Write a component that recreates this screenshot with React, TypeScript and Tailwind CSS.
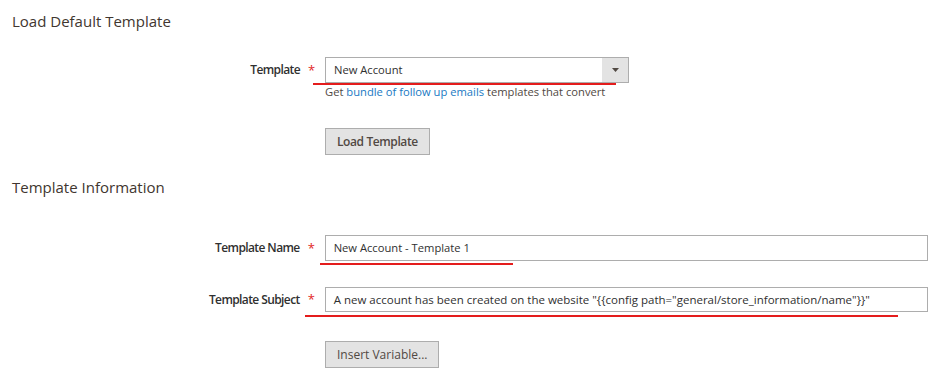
const fieldLabel = 'w-[288px] text-right text-[12px] font-semibold tracking-[-0.6px] text-[#303030]'

function Required() {
  return <span className="ml-[8px] w-[17px] text-[13px] leading-none text-[#e22626]">*</span>
}

function Underline({ left, width, top }: { left: number; width: number; top: number }) {
  return (
    <span
      className="pointer-events-none absolute h-[2px] bg-[#e41c1c]"
      style={{ left, width, top }}
    />
  )
}

export default function App() {
  return (
    <div className="relative min-h-[379px] w-[940px] bg-white px-[12px] font-['Open_Sans',sans-serif] text-[#303030]">
      <h2 className="pt-[11px] text-[15px] leading-[20px] text-[#41362f]">Load Default Template</h2>

      <div className="relative mt-[26px] flex items-center">
        <label className={fieldLabel}>Template</label>
        <Required />
        <div className="flex h-[26px] w-[304px] items-stretch border border-[#adadad] bg-white">
          <span className="flex flex-1 items-center pl-[8px] text-[11.2px] text-[#303030]">New Account</span>
          <span className="flex w-[26px] items-center justify-center bg-[#e3e3e3]">
            <svg width="7" height="4" viewBox="0 0 7 4">
              <path d="M0 0h7L3.5 4z" fill="#514943" />
            </svg>
          </span>
        </div>
        <Underline left={301} width={303} top={26} />
      </div>
      <p className="ml-[313px] mt-[1px] text-[11.2px] leading-[16px] text-[#514943]">
        Get <a className="text-[#1979c3]">bundle of follow up emails</a> templates that convert
      </p>

      <button className="ml-[313px] mt-[28px] h-[27px] border border-[#adadad] bg-[#e3e3e3] px-[11px] text-[12px] font-semibold tracking-[-0.4px] text-[#514943]">
        Load Template
      </button>

      <h2 className="mt-[22px] text-[15px] leading-[20px] text-[#41362f]">Template Information</h2>

      <div className="relative mt-[38px] flex items-center">
        <label className={fieldLabel}>Template Name</label>
        <Required />
        <div className="flex h-[26px] w-[604px] items-center border border-[#adadad] bg-white pl-[8px] text-[11.2px] text-[#303030]">
          New Account - Template 1
        </div>
        <Underline left={308} width={193} top={28} />
      </div>

      <div className="relative mt-[26px] flex items-center">
        <label className={fieldLabel}>Template Subject</label>
        <Required />
        <div className="flex h-[25px] w-[604px] items-center border border-[#adadad] bg-white pl-[8px] text-[11.5px] text-[#303030]">
          A new account has been created on the website "{'{{'}config path="general/store_information/name"{'}}'}"
        </div>
        <Underline left={293} width={593} top={28} />
      </div>

      <button className="ml-[313px] mt-[29px] h-[27px] border border-[#adadad] bg-[#e3e3e3] px-[11px] text-[12px] text-[#514943]">
        Insert Variable...
      </button>
    </div>
  )
}
